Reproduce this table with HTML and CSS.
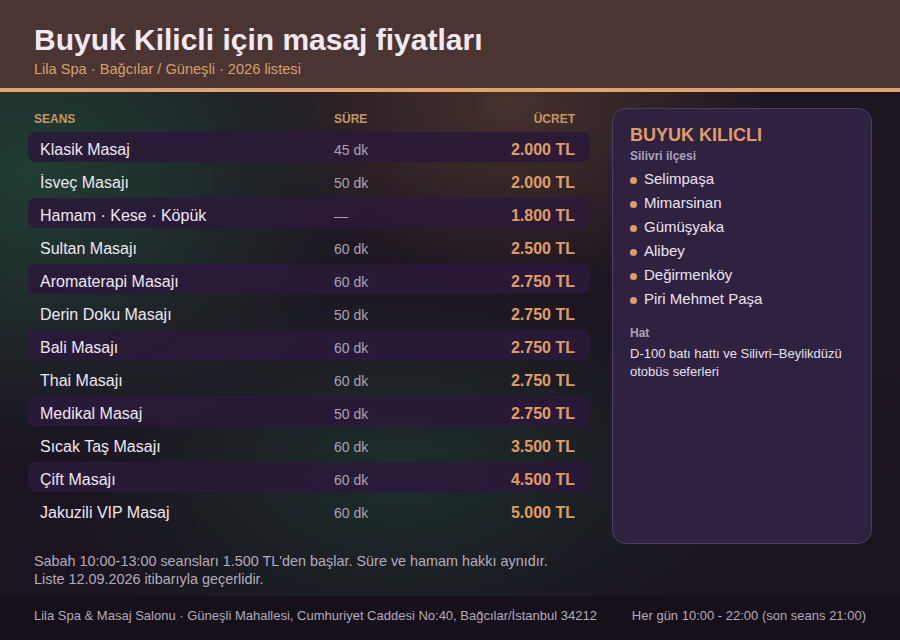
FILE: index.html
```html
<!DOCTYPE html>
<html lang="tr">
<head>
<meta charset="utf-8">
<title>Buyuk Kilicli için masaj fiyatları</title>
<link rel="stylesheet" href="styles.css">
</head>
<body>
<header class="top">
  <h1 class="title">Buyuk Kilicli için masaj fiyatları</h1>
  <p class="subtitle">Lila Spa · Bağcılar / Güneşli · 2026 listesi</p>
</header>
<main class="main">
  <div class="content">
    <section class="prices">
      <div class="thead">
        <span>SEANS</span><span>SÜRE</span><span class="r">ÜCRET</span>
      </div>
      <div class="row alt"><span class="name">Klasik Masaj</span><span class="dur">45 dk</span><span class="price">2.000 TL</span></div>
      <div class="row"><span class="name">İsveç Masajı</span><span class="dur">50 dk</span><span class="price">2.000 TL</span></div>
      <div class="row alt"><span class="name">Hamam · Kese · Köpük</span><span class="dur">—</span><span class="price">1.800 TL</span></div>
      <div class="row"><span class="name">Sultan Masajı</span><span class="dur">60 dk</span><span class="price">2.500 TL</span></div>
      <div class="row alt"><span class="name">Aromaterapi Masajı</span><span class="dur">60 dk</span><span class="price">2.750 TL</span></div>
      <div class="row"><span class="name">Derin Doku Masajı</span><span class="dur">50 dk</span><span class="price">2.750 TL</span></div>
      <div class="row alt"><span class="name">Bali Masajı</span><span class="dur">60 dk</span><span class="price">2.750 TL</span></div>
      <div class="row"><span class="name">Thai Masajı</span><span class="dur">60 dk</span><span class="price">2.750 TL</span></div>
      <div class="row alt"><span class="name">Medikal Masaj</span><span class="dur">50 dk</span><span class="price">2.750 TL</span></div>
      <div class="row"><span class="name">Sıcak Taş Masajı</span><span class="dur">60 dk</span><span class="price">3.500 TL</span></div>
      <div class="row alt"><span class="name">Çift Masajı</span><span class="dur">60 dk</span><span class="price">4.500 TL</span></div>
      <div class="row"><span class="name">Jakuzili VIP Masaj</span><span class="dur">60 dk</span><span class="price">5.000 TL</span></div>
    </section>
    <aside class="side">
      <h2 class="side-title">BUYUK KILICLI</h2>
      <div class="side-label">Silivri ilçesi</div>
      <ul class="hoods">
        <li>Selimpaşa</li>
        <li>Mimarsinan</li>
        <li>Gümüşyaka</li>
        <li>Alibey</li>
        <li>Değirmenköy</li>
        <li>Piri Mehmet Paşa</li>
      </ul>
      <div class="side-label hat">Hat</div>
      <p class="side-text">D-100 batı hattı ve Silivri–Beylikdüzü otobüs seferleri</p>
    </aside>
  </div>
  <div class="note">
    <p>Sabah 10:00-13:00 seansları 1.500 TL'den başlar. Süre ve hamam hakkı aynıdır.</p>
    <p>Liste 12.09.2026 itibarıyla geçerlidir.</p>
  </div>
</main>
<footer class="foot">
  <span>Lila Spa &amp; Masaj Salonu · Güneşli Mahallesi, Cumhuriyet Caddesi No:40, Bağcılar/İstanbul 34212</span>
  <span>Her gün 10:00 - 22:00 (son seans 21:00)</span>
</footer>
</body>
</html>
```
FILE: styles.css
```css
* { box-sizing: border-box; }
html, body { margin: 0; padding: 0; }
body {
  width: 900px;
  height: 640px;
  overflow: hidden;
  display: flex;
  flex-direction: column;
  font-family: "Liberation Sans", Arial, sans-serif;
  background: #1b1520;
  color: #ece4ee;
}
.top {
  height: 92px;
  padding: 23px 34px 0;
  background: #4a3532;
  border-bottom: 4px solid #e0a36c;
}
.title {
  margin: 0;
  font-size: 30px;
  line-height: 34px;
  font-weight: 700;
  color: #f3e9f3;
}
.subtitle {
  margin: 3px 0 0;
  font-size: 14.6px;
  line-height: 18px;
  color: #d9a06b;
}
.main {
  flex: 1;
  display: flex;
  flex-direction: column;
  background:
    radial-gradient(ellipse 320px 240px at 510px 10px, rgba(72,50,45,0.95), rgba(72,50,45,0) 80%),
    radial-gradient(ellipse 430px 350px at 30px 80px, rgba(32,64,52,0.95), rgba(32,64,52,0) 80%),
    radial-gradient(ellipse 420px 250px at 400px 380px, rgba(29,54,45,0.75), rgba(29,54,45,0) 80%),
    linear-gradient(180deg, #1e1722 0%, #1a1420 100%);
}
.content {
  flex: 1;
  display: flex;
  gap: 22px;
  padding: 16px 28px 0;
}
.prices {
  flex: 1;
  display: flex;
  flex-direction: column;
}
.thead {
  display: grid;
  grid-template-columns: 300px 1fr auto;
  height: 24px;
  padding: 3px 15px 0 6px;
  font-size: 12px;
  line-height: 16px;
  font-weight: 700;
  color: #c9955f;
}
.thead .r { text-align: right; }
.row {
  display: grid;
  grid-template-columns: 294px 1fr auto;
  align-items: center;
  height: 30px;
  margin-bottom: 3px;
  padding: 5px 15px 0 12px;
  line-height: 24px;
  border-radius: 8px;
}
.row.alt { background: rgba(42, 25, 56, 0.9); }
.name { font-size: 16px; color: #efe7f0; }
.dur { font-size: 14px; color: #aaa2b2; }
.price { font-size: 16px; font-weight: 700; color: #e09d63; text-align: right; }
.side {
  width: 260px;
  padding: 15px 16px 0 17px;
  background: #2f2140;
  border: 1px solid #4c3e60;
  border-radius: 14px;
}
.side-title {
  margin: 0;
  font-size: 18px;
  line-height: 22px;
  font-weight: 700;
  color: #e09d63;
}
.side-label {
  margin-top: 2px;
  font-size: 12px;
  line-height: 16px;
  font-weight: 700;
  color: #ada1b9;
}
.side-label.hat { margin-top: 14px; }
.hoods {
  list-style: none;
  margin: 3px 0 0;
  padding: 0;
}
.hoods li {
  display: flex;
  align-items: center;
  gap: 7px;
  font-size: 15px;
  line-height: 24px;
  color: #ece4ee;
}
.hoods li::before {
  content: "";
  width: 7px;
  height: 7px;
  border-radius: 50%;
  background: #e09d63;
  margin-top: 2px;
  flex: none;
}
.side-text {
  margin: 4px 0 0;
  font-size: 13px;
  line-height: 18px;
  color: #e8e0ec;
}
.note {
  padding: 8px 34px 8px;
  font-size: 14.4px;
  line-height: 18px;
  color: #b4acbc;
}
.note p { margin: 0; }
.foot {
  height: 44px;
  padding: 12px 34px 0;
  display: flex;
  justify-content: space-between;
  font-size: 13px;
  line-height: 16px;
  color: #b3abbb;
  background: #15101a;
}
```
